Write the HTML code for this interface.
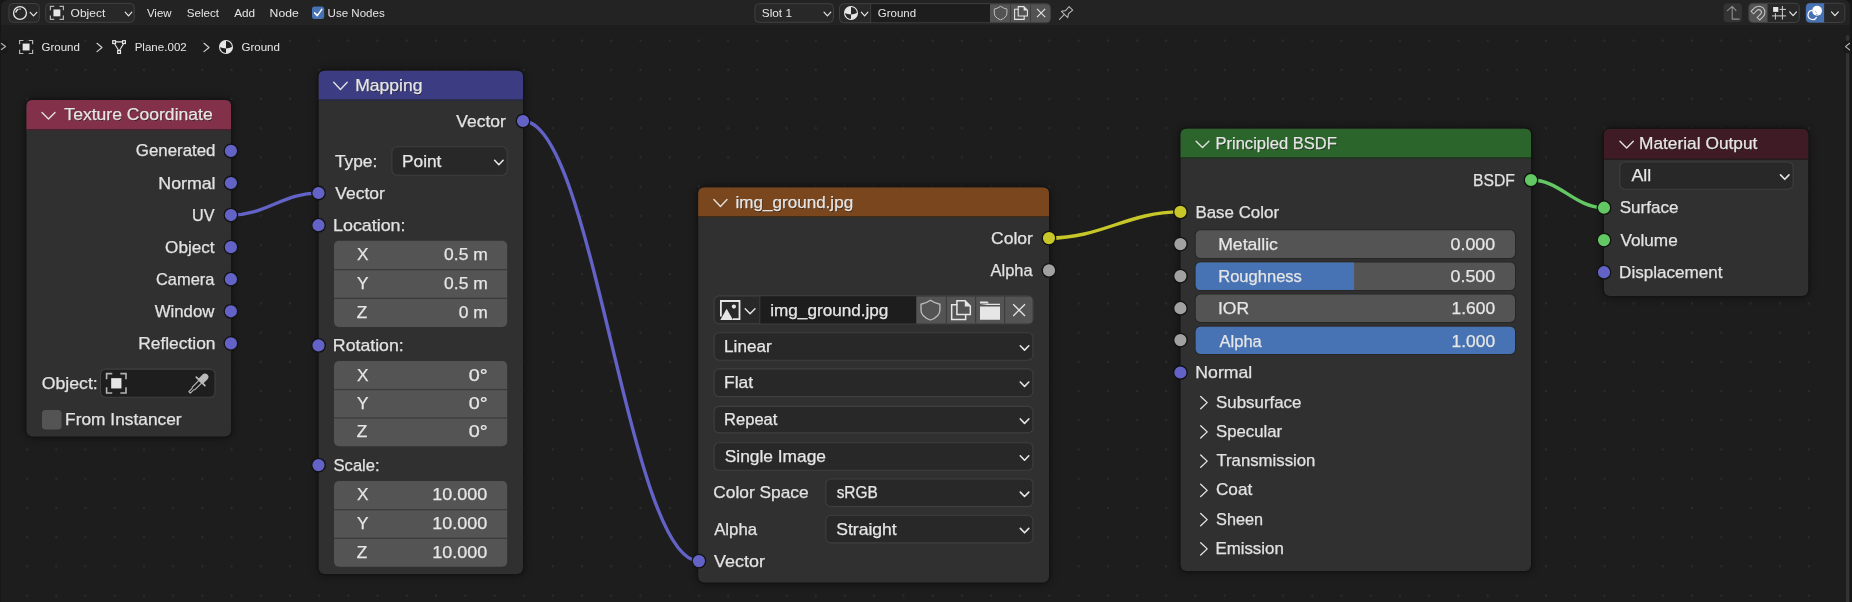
<!DOCTYPE html>
<html><head><meta charset="utf-8">
<style>
html,body{margin:0;padding:0;background:#161616;width:1852px;height:602px;overflow:hidden}
svg{display:block;font-family:"Liberation Sans",sans-serif;will-change:transform}
</style></head>
<body>
<svg width="1852" height="602" viewBox="0 0 1852 602">
<defs>
<pattern id="dots" x="27.1" y="11.4" width="29.21" height="29.21" patternUnits="userSpaceOnUse">
<circle cx="0" cy="0" r="1.1" fill="#2c2c2c"/>
<circle cx="29.21" cy="0" r="1.1" fill="#2c2c2c"/>
<circle cx="0" cy="29.21" r="1.1" fill="#2c2c2c"/>
<circle cx="29.21" cy="29.21" r="1.1" fill="#2c2c2c"/>
</pattern>
<filter id="shadow" x="-20%" y="-20%" width="140%" height="140%">
<feGaussianBlur stdDeviation="4"/>
</filter>
</defs>
<rect x="0" y="0" width="1852" height="602" fill="#161616"/>
<path d="M1,8 Q1,0 9,0 L1842.5,0 Q1850.5,0 1850.5,8 L1850.5,602 L1,602 Z" fill="#1d1d1d"/>
<rect x="1.5" y="25" width="1828" height="577" fill="url(#dots)"/>
<path d="M1,8 Q1,0 9,0 L1842.5,0 Q1850.5,0 1850.5,8 L1850.5,25 L1,25 Z" fill="#232323"/>
<rect x="26.50" y="100.00" width="204.50" height="336.50" rx="6" fill="#000" opacity="0.6" filter="url(#shadow)"/>
<rect x="25.30" y="98.80" width="206.90" height="338.90" rx="7" fill="#141414"/>
<rect x="26.50" y="100.00" width="204.50" height="336.50" rx="6" fill="#303030"/>
<path d="M26.5,129.2 L26.5,106 Q26.5,100 32.5,100 L225,100 Q231,100 231,106 L231,129.2 Z" fill="#83314a"/>
<rect x="26.50" y="129.20" width="204.50" height="1.60" rx="0" fill="#44232d"/>
<path d="M42,112.5 L48.5,119 L55,112.5" fill="none" stroke="#e0e0e0" stroke-width="1.4" stroke-linecap="round" stroke-linejoin="round"/>
<text x="64.96" y="120.90" font-size="16.4" textLength="148.36" lengthAdjust="spacingAndGlyphs" fill="#000" opacity="0.55">Texture Coordinate</text>
<text x="64.36" y="119.90" font-size="16.4" textLength="148.36" lengthAdjust="spacingAndGlyphs" fill="#e6e6e6" stroke="#e6e6e6" stroke-width="0.25">Texture Coordinate</text>
<text x="215.49" y="156.00" font-size="16.4" text-anchor="end" textLength="79.63" lengthAdjust="spacingAndGlyphs" fill="#e2e2e2" stroke="#e2e2e2" stroke-width="0.25">Generated</text>
<text x="215.59" y="189.00" font-size="16.4" text-anchor="end" textLength="57.25" lengthAdjust="spacingAndGlyphs" fill="#e2e2e2" stroke="#e2e2e2" stroke-width="0.25">Normal</text>
<text x="214.47" y="221.00" font-size="16.4" text-anchor="end" textLength="22.52" lengthAdjust="spacingAndGlyphs" fill="#e2e2e2" stroke="#e2e2e2" stroke-width="0.25">UV</text>
<text x="214.53" y="253.00" font-size="16.4" text-anchor="end" textLength="49.44" lengthAdjust="spacingAndGlyphs" fill="#e2e2e2" stroke="#e2e2e2" stroke-width="0.25">Object</text>
<text x="214.40" y="285.00" font-size="16.4" text-anchor="end" textLength="58.43" lengthAdjust="spacingAndGlyphs" fill="#e2e2e2" stroke="#e2e2e2" stroke-width="0.25">Camera</text>
<text x="214.36" y="317.00" font-size="16.4" text-anchor="end" textLength="59.63" lengthAdjust="spacingAndGlyphs" fill="#e2e2e2" stroke="#e2e2e2" stroke-width="0.25">Window</text>
<text x="215.53" y="349.00" font-size="16.4" text-anchor="end" textLength="77.36" lengthAdjust="spacingAndGlyphs" fill="#e2e2e2" stroke="#e2e2e2" stroke-width="0.25">Reflection</text>
<text x="41.76" y="389.00" font-size="16.4" textLength="56.05" lengthAdjust="spacingAndGlyphs" fill="#e2e2e2" stroke="#e2e2e2" stroke-width="0.25">Object:</text>
<rect x="100.50" y="369.10" width="114.50" height="28.20" rx="5" fill="#1e1e1e" stroke="#404040" stroke-width="1.1"/>
<rect x="42.00" y="410.00" width="19.50" height="19.50" rx="3.5" fill="#545454"/>
<text x="65.08" y="425.00" font-size="16.4" textLength="116.51" lengthAdjust="spacingAndGlyphs" fill="#e2e2e2" stroke="#e2e2e2" stroke-width="0.25">From Instancer</text>
<rect x="318.70" y="70.80" width="204.30" height="503.20" rx="6" fill="#000" opacity="0.6" filter="url(#shadow)"/>
<rect x="317.50" y="69.60" width="206.70" height="505.60" rx="7" fill="#141414"/>
<rect x="318.70" y="70.80" width="204.30" height="503.20" rx="6" fill="#303030"/>
<path d="M318.7,99.4 L318.7,76.8 Q318.7,70.8 324.7,70.8 L517,70.8 Q523,70.8 523,76.8 L523,99.4 Z" fill="#3c3c83"/>
<rect x="318.70" y="99.40" width="204.30" height="1.60" rx="0" fill="#282844"/>
<path d="M333.7,82.2 L340.45,89.4 L347.2,82.2" fill="none" stroke="#e0e0e0" stroke-width="1.4" stroke-linecap="round" stroke-linejoin="round"/>
<text x="355.86" y="92.00" font-size="16.4" textLength="67.27" lengthAdjust="spacingAndGlyphs" fill="#000" opacity="0.55">Mapping</text>
<text x="355.26" y="91.00" font-size="16.4" textLength="67.27" lengthAdjust="spacingAndGlyphs" fill="#e6e6e6" stroke="#e6e6e6" stroke-width="0.25">Mapping</text>
<text x="505.78" y="127.00" font-size="16.4" text-anchor="end" textLength="49.56" lengthAdjust="spacingAndGlyphs" fill="#e2e2e2" stroke="#e2e2e2" stroke-width="0.25">Vector</text>
<text x="334.92" y="167.00" font-size="16.4" textLength="42.33" lengthAdjust="spacingAndGlyphs" fill="#e2e2e2" stroke="#e2e2e2" stroke-width="0.25">Type:</text>
<rect x="391.90" y="146.80" width="115.30" height="28.40" rx="5" fill="#282828" stroke="#3f3f3f" stroke-width="1.1"/>
<text x="401.98" y="167.00" font-size="16.4" textLength="39.45" lengthAdjust="spacingAndGlyphs" fill="#e6e6e6" stroke="#e6e6e6" stroke-width="0.25">Point</text>
<path d="M494.59999999999997,160.3 L498.84999999999997,164.7 L503.09999999999997,160.3" fill="none" stroke="#e6e6e6" stroke-width="1.6" stroke-linecap="round" stroke-linejoin="round"/>
<text x="335.22" y="199.00" font-size="16.4" textLength="49.56" lengthAdjust="spacingAndGlyphs" fill="#e2e2e2" stroke="#e2e2e2" stroke-width="0.25">Vector</text>
<text x="333.03" y="231.00" font-size="16.4" textLength="72.50" lengthAdjust="spacingAndGlyphs" fill="#e2e2e2" stroke="#e2e2e2" stroke-width="0.25">Location:</text>
<text x="332.85" y="351.30" font-size="16.4" textLength="70.87" lengthAdjust="spacingAndGlyphs" fill="#e2e2e2" stroke="#e2e2e2" stroke-width="0.25">Rotation:</text>
<text x="333.55" y="471.00" font-size="16.4" textLength="46.07" lengthAdjust="spacingAndGlyphs" fill="#e2e2e2" stroke="#e2e2e2" stroke-width="0.25">Scale:</text>
<rect x="334.00" y="240.80" width="173.20" height="86.20" rx="5" fill="#545454"/>
<rect x="334.00" y="269.03" width="173.20" height="1.20" rx="0" fill="#3a3a3a"/>
<rect x="334.00" y="297.77" width="173.20" height="1.20" rx="0" fill="#3a3a3a"/>
<text x="357.01" y="260.20" font-size="16.4" textLength="11.49" lengthAdjust="spacingAndGlyphs" fill="#e6e6e6" stroke="#e6e6e6" stroke-width="0.25">X</text>
<text x="487.75" y="260.20" font-size="16.4" text-anchor="end" textLength="43.63" lengthAdjust="spacingAndGlyphs" fill="#e6e6e6" stroke="#e6e6e6" stroke-width="0.25">0.5 m</text>
<text x="357.02" y="288.93" font-size="16.4" textLength="11.49" lengthAdjust="spacingAndGlyphs" fill="#e6e6e6" stroke="#e6e6e6" stroke-width="0.25">Y</text>
<text x="487.75" y="288.93" font-size="16.4" text-anchor="end" textLength="43.63" lengthAdjust="spacingAndGlyphs" fill="#e6e6e6" stroke="#e6e6e6" stroke-width="0.25">0.5 m</text>
<text x="356.85" y="317.67" font-size="16.4" textLength="10.52" lengthAdjust="spacingAndGlyphs" fill="#e6e6e6" stroke="#e6e6e6" stroke-width="0.25">Z</text>
<text x="487.75" y="317.67" font-size="16.4" text-anchor="end" textLength="29.03" lengthAdjust="spacingAndGlyphs" fill="#e6e6e6" stroke="#e6e6e6" stroke-width="0.25">0 m</text>
<rect x="334.00" y="361.10" width="173.20" height="85.10" rx="5" fill="#545454"/>
<rect x="334.00" y="388.97" width="173.20" height="1.20" rx="0" fill="#3a3a3a"/>
<rect x="334.00" y="417.33" width="173.20" height="1.20" rx="0" fill="#3a3a3a"/>
<text x="357.01" y="380.50" font-size="16.4" textLength="11.49" lengthAdjust="spacingAndGlyphs" fill="#e6e6e6" stroke="#e6e6e6" stroke-width="0.25">X</text>
<text x="487.79" y="380.50" font-size="16.4" text-anchor="end" textLength="18.97" lengthAdjust="spacingAndGlyphs" fill="#e6e6e6" stroke="#e6e6e6" stroke-width="0.25">0°</text>
<text x="357.02" y="408.87" font-size="16.4" textLength="11.49" lengthAdjust="spacingAndGlyphs" fill="#e6e6e6" stroke="#e6e6e6" stroke-width="0.25">Y</text>
<text x="487.79" y="408.87" font-size="16.4" text-anchor="end" textLength="18.97" lengthAdjust="spacingAndGlyphs" fill="#e6e6e6" stroke="#e6e6e6" stroke-width="0.25">0°</text>
<text x="356.85" y="437.23" font-size="16.4" textLength="10.52" lengthAdjust="spacingAndGlyphs" fill="#e6e6e6" stroke="#e6e6e6" stroke-width="0.25">Z</text>
<text x="487.79" y="437.23" font-size="16.4" text-anchor="end" textLength="18.97" lengthAdjust="spacingAndGlyphs" fill="#e6e6e6" stroke="#e6e6e6" stroke-width="0.25">0°</text>
<rect x="334.00" y="481.00" width="173.20" height="85.80" rx="5" fill="#545454"/>
<rect x="334.00" y="509.10" width="173.20" height="1.20" rx="0" fill="#3a3a3a"/>
<rect x="334.00" y="537.70" width="173.20" height="1.20" rx="0" fill="#3a3a3a"/>
<text x="357.01" y="500.40" font-size="16.4" textLength="11.49" lengthAdjust="spacingAndGlyphs" fill="#e6e6e6" stroke="#e6e6e6" stroke-width="0.25">X</text>
<text x="487.30" y="500.40" font-size="16.4" text-anchor="end" textLength="54.97" lengthAdjust="spacingAndGlyphs" fill="#e6e6e6" stroke="#e6e6e6" stroke-width="0.25">10.000</text>
<text x="357.02" y="529.00" font-size="16.4" textLength="11.49" lengthAdjust="spacingAndGlyphs" fill="#e6e6e6" stroke="#e6e6e6" stroke-width="0.25">Y</text>
<text x="487.30" y="529.00" font-size="16.4" text-anchor="end" textLength="54.97" lengthAdjust="spacingAndGlyphs" fill="#e6e6e6" stroke="#e6e6e6" stroke-width="0.25">10.000</text>
<text x="356.85" y="557.60" font-size="16.4" textLength="10.52" lengthAdjust="spacingAndGlyphs" fill="#e6e6e6" stroke="#e6e6e6" stroke-width="0.25">Z</text>
<text x="487.30" y="557.60" font-size="16.4" text-anchor="end" textLength="54.97" lengthAdjust="spacingAndGlyphs" fill="#e6e6e6" stroke="#e6e6e6" stroke-width="0.25">10.000</text>
<rect x="698.20" y="187.60" width="350.80" height="395.00" rx="6" fill="#000" opacity="0.6" filter="url(#shadow)"/>
<rect x="697.00" y="186.40" width="353.20" height="397.40" rx="7" fill="#141414"/>
<rect x="698.20" y="187.60" width="350.80" height="395.00" rx="6" fill="#303030"/>
<path d="M698.2,216.0 L698.2,193.6 Q698.2,187.6 704.2,187.6 L1043,187.6 Q1049,187.6 1049,193.6 L1049,216.0 Z" fill="#79461d"/>
<rect x="698.20" y="216.00" width="350.80" height="1.60" rx="0" fill="#402c1b"/>
<path d="M713.9,199.6 L720.45,206.4 L727,199.6" fill="none" stroke="#e0e0e0" stroke-width="1.4" stroke-linecap="round" stroke-linejoin="round"/>
<text x="736.11" y="208.80" font-size="16.4" textLength="117.64" lengthAdjust="spacingAndGlyphs" fill="#000" opacity="0.55">img_ground.jpg</text>
<text x="735.51" y="207.80" font-size="16.4" textLength="117.64" lengthAdjust="spacingAndGlyphs" fill="#e6e6e6" stroke="#e6e6e6" stroke-width="0.25">img_ground.jpg</text>
<text x="1032.89" y="244.00" font-size="16.4" text-anchor="end" textLength="41.88" lengthAdjust="spacingAndGlyphs" fill="#e2e2e2" stroke="#e2e2e2" stroke-width="0.25">Color</text>
<text x="1032.60" y="276.00" font-size="16.4" text-anchor="end" textLength="42.03" lengthAdjust="spacingAndGlyphs" fill="#e2e2e2" stroke="#e2e2e2" stroke-width="0.25">Alpha</text>
<rect x="714.10" y="295.90" width="319.00" height="28.00" rx="5" fill="#282828" stroke="#3f3f3f" stroke-width="1.1"/>
<rect x="760.00" y="296.40" width="156.30" height="27.00" rx="0" fill="#1d1d1d"/>
<path d="M916.3,296.4 L1028.2,296.4 Q1032.7,296.4 1032.7,300.9 L1032.7,318.9 Q1032.7,323.4 1028.2,323.4 L916.3,323.4 Z" fill="#545454"/>
<rect x="945.80" y="296.40" width="1.20" height="27.00" rx="0" fill="#3d3d3d"/>
<rect x="975.00" y="296.40" width="1.20" height="27.00" rx="0" fill="#3d3d3d"/>
<rect x="1004.00" y="296.40" width="1.20" height="27.00" rx="0" fill="#3d3d3d"/>
<rect x="759.30" y="296.40" width="1.00" height="27.00" rx="0" fill="#3d3d3d"/>
<text x="770.25" y="316.00" font-size="16.4" textLength="118.15" lengthAdjust="spacingAndGlyphs" fill="#e6e6e6" stroke="#e6e6e6" stroke-width="0.25">img_ground.jpg</text>
<rect x="714.10" y="332.70" width="318.80" height="27.50" rx="5" fill="#282828" stroke="#3f3f3f" stroke-width="1.1"/>
<text x="724.10" y="351.70" font-size="16.4" textLength="47.48" lengthAdjust="spacingAndGlyphs" fill="#e6e6e6" stroke="#e6e6e6" stroke-width="0.25">Linear</text>
<path d="M1020.3000000000001,345.75 L1024.5500000000002,350.15 L1028.8000000000002,345.75" fill="none" stroke="#e6e6e6" stroke-width="1.6" stroke-linecap="round" stroke-linejoin="round"/>
<rect x="714.10" y="368.90" width="318.80" height="27.70" rx="5" fill="#282828" stroke="#3f3f3f" stroke-width="1.1"/>
<text x="724.07" y="387.90" font-size="16.4" textLength="29.06" lengthAdjust="spacingAndGlyphs" fill="#e6e6e6" stroke="#e6e6e6" stroke-width="0.25">Flat</text>
<path d="M1020.3000000000001,382.05 L1024.5500000000002,386.45 L1028.8000000000002,382.05" fill="none" stroke="#e6e6e6" stroke-width="1.6" stroke-linecap="round" stroke-linejoin="round"/>
<rect x="714.10" y="406.40" width="318.80" height="26.50" rx="5" fill="#282828" stroke="#3f3f3f" stroke-width="1.1"/>
<text x="724.14" y="425.40" font-size="16.4" textLength="53.28" lengthAdjust="spacingAndGlyphs" fill="#e6e6e6" stroke="#e6e6e6" stroke-width="0.25">Repeat</text>
<path d="M1020.3000000000001,418.95 L1024.5500000000002,423.34999999999997 L1028.8000000000002,418.95" fill="none" stroke="#e6e6e6" stroke-width="1.6" stroke-linecap="round" stroke-linejoin="round"/>
<rect x="714.10" y="442.70" width="318.80" height="27.60" rx="5" fill="#282828" stroke="#3f3f3f" stroke-width="1.1"/>
<text x="724.71" y="461.70" font-size="16.4" textLength="101.26" lengthAdjust="spacingAndGlyphs" fill="#e6e6e6" stroke="#e6e6e6" stroke-width="0.25">Single Image</text>
<path d="M1020.3000000000001,455.8 L1024.5500000000002,460.2 L1028.8000000000002,455.8" fill="none" stroke="#e6e6e6" stroke-width="1.6" stroke-linecap="round" stroke-linejoin="round"/>
<text x="713.32" y="498.00" font-size="16.4" textLength="95.35" lengthAdjust="spacingAndGlyphs" fill="#e2e2e2" stroke="#e2e2e2" stroke-width="0.25">Color Space</text>
<rect x="825.80" y="479.00" width="207.10" height="27.60" rx="5" fill="#282828" stroke="#3f3f3f" stroke-width="1.1"/>
<text x="836.67" y="498.00" font-size="16.4" textLength="41.14" lengthAdjust="spacingAndGlyphs" fill="#e6e6e6" stroke="#e6e6e6" stroke-width="0.25">sRGB</text>
<path d="M1020.3000000000001,492.1 L1024.5500000000002,496.5 L1028.8000000000002,492.1" fill="none" stroke="#e6e6e6" stroke-width="1.6" stroke-linecap="round" stroke-linejoin="round"/>
<text x="714.17" y="534.50" font-size="16.4" textLength="42.93" lengthAdjust="spacingAndGlyphs" fill="#e2e2e2" stroke="#e2e2e2" stroke-width="0.25">Alpha</text>
<rect x="825.80" y="515.30" width="207.10" height="27.60" rx="5" fill="#282828" stroke="#3f3f3f" stroke-width="1.1"/>
<text x="836.30" y="534.50" font-size="16.4" textLength="60.42" lengthAdjust="spacingAndGlyphs" fill="#e6e6e6" stroke="#e6e6e6" stroke-width="0.25">Straight</text>
<path d="M1020.3000000000001,528.3999999999999 L1024.5500000000002,532.8 L1028.8000000000002,528.3999999999999" fill="none" stroke="#e6e6e6" stroke-width="1.6" stroke-linecap="round" stroke-linejoin="round"/>
<text x="714.12" y="567.00" font-size="16.4" textLength="50.87" lengthAdjust="spacingAndGlyphs" fill="#e2e2e2" stroke="#e2e2e2" stroke-width="0.25">Vector</text>
<rect x="1180.60" y="128.80" width="350.40" height="442.20" rx="6" fill="#000" opacity="0.6" filter="url(#shadow)"/>
<rect x="1179.40" y="127.60" width="352.80" height="444.60" rx="7" fill="#141414"/>
<rect x="1180.60" y="128.80" width="350.40" height="442.20" rx="6" fill="#303030"/>
<path d="M1180.6,157.3 L1180.6,134.8 Q1180.6,128.8 1186.6,128.8 L1525,128.8 Q1531,128.8 1531,134.8 L1531,157.3 Z" fill="#2b652b"/>
<rect x="1180.60" y="157.30" width="350.40" height="1.60" rx="0" fill="#213821"/>
<path d="M1196.1,141.2 L1202.5,147.6 L1208.9,141.2" fill="none" stroke="#e0e0e0" stroke-width="1.4" stroke-linecap="round" stroke-linejoin="round"/>
<text x="1216.04" y="150.00" font-size="16.4" textLength="121.42" lengthAdjust="spacingAndGlyphs" fill="#000" opacity="0.55">Principled BSDF</text>
<text x="1215.44" y="149.00" font-size="16.4" textLength="121.42" lengthAdjust="spacingAndGlyphs" fill="#e6e6e6" stroke="#e6e6e6" stroke-width="0.25">Principled BSDF</text>
<text x="1514.93" y="185.50" font-size="16.4" text-anchor="end" textLength="41.81" lengthAdjust="spacingAndGlyphs" fill="#e2e2e2" stroke="#e2e2e2" stroke-width="0.25">BSDF</text>
<text x="1195.41" y="218.00" font-size="16.4" textLength="83.67" lengthAdjust="spacingAndGlyphs" fill="#e2e2e2" stroke="#e2e2e2" stroke-width="0.25">Base Color</text>
<rect x="1194.70" y="229.20" width="321.30" height="29.90" rx="6" fill="#262626"/>
<rect x="1195.70" y="230.20" width="319.30" height="27.90" rx="5" fill="#545454"/>
<text x="1218.15" y="250.00" font-size="16.4" textLength="59.81" lengthAdjust="spacingAndGlyphs" fill="#e6e6e6" stroke="#e6e6e6" stroke-width="0.25">Metallic</text>
<text x="1495.20" y="250.00" font-size="16.4" text-anchor="end" textLength="44.59" lengthAdjust="spacingAndGlyphs" fill="#e6e6e6" stroke="#e6e6e6" stroke-width="0.25">0.000</text>
<rect x="1194.70" y="261.40" width="321.30" height="29.70" rx="6" fill="#262626"/>
<rect x="1195.70" y="262.40" width="319.30" height="27.70" rx="5" fill="#545454"/>
<path d="M1354.1,262.4 L1200.7,262.4 Q1195.7,262.4 1195.7,267.4 L1195.7,285.1 Q1195.7,290.1 1200.7,290.1 L1354.1,290.1 Z" fill="#4772b3"/>
<text x="1218.24" y="282.20" font-size="16.4" textLength="83.65" lengthAdjust="spacingAndGlyphs" fill="#e6e6e6" stroke="#e6e6e6" stroke-width="0.25">Roughness</text>
<text x="1495.20" y="282.20" font-size="16.4" text-anchor="end" textLength="44.59" lengthAdjust="spacingAndGlyphs" fill="#e6e6e6" stroke="#e6e6e6" stroke-width="0.25">0.500</text>
<rect x="1194.70" y="293.60" width="321.30" height="29.40" rx="6" fill="#262626"/>
<rect x="1195.70" y="294.60" width="319.30" height="27.40" rx="5" fill="#545454"/>
<text x="1217.98" y="314.40" font-size="16.4" textLength="31.13" lengthAdjust="spacingAndGlyphs" fill="#e6e6e6" stroke="#e6e6e6" stroke-width="0.25">IOR</text>
<text x="1495.18" y="314.40" font-size="16.4" text-anchor="end" textLength="43.61" lengthAdjust="spacingAndGlyphs" fill="#e6e6e6" stroke="#e6e6e6" stroke-width="0.25">1.600</text>
<rect x="1194.70" y="325.80" width="321.30" height="29.10" rx="6" fill="#262626"/>
<rect x="1195.70" y="326.80" width="319.30" height="27.10" rx="5" fill="#545454"/>
<rect x="1195.70" y="326.80" width="319.30" height="27.10" rx="5" fill="#4772b3"/>
<text x="1219.57" y="346.60" font-size="16.4" textLength="42.23" lengthAdjust="spacingAndGlyphs" fill="#e6e6e6" stroke="#e6e6e6" stroke-width="0.25">Alpha</text>
<text x="1495.18" y="346.60" font-size="16.4" text-anchor="end" textLength="43.61" lengthAdjust="spacingAndGlyphs" fill="#e6e6e6" stroke="#e6e6e6" stroke-width="0.25">1.000</text>
<text x="1195.35" y="378.20" font-size="16.4" textLength="56.83" lengthAdjust="spacingAndGlyphs" fill="#e2e2e2" stroke="#e2e2e2" stroke-width="0.25">Normal</text>
<path d="M1200.7,396.5 L1207.2,402.6 L1200.7,408.7" fill="none" stroke="#e6e6e6" stroke-width="1.3" stroke-linecap="round" stroke-linejoin="round"/>
<text x="1216.03" y="407.50" font-size="16.4" textLength="85.42" lengthAdjust="spacingAndGlyphs" fill="#e2e2e2" stroke="#e2e2e2" stroke-width="0.25">Subsurface</text>
<path d="M1200.7,425.76 L1207.2,431.86 L1200.7,437.96" fill="none" stroke="#e6e6e6" stroke-width="1.3" stroke-linecap="round" stroke-linejoin="round"/>
<text x="1216.04" y="436.76" font-size="16.4" textLength="66.04" lengthAdjust="spacingAndGlyphs" fill="#e2e2e2" stroke="#e2e2e2" stroke-width="0.25">Specular</text>
<path d="M1200.7,455.02 L1207.2,461.12 L1200.7,467.21999999999997" fill="none" stroke="#e6e6e6" stroke-width="1.3" stroke-linecap="round" stroke-linejoin="round"/>
<text x="1216.43" y="466.02" font-size="16.4" textLength="98.95" lengthAdjust="spacingAndGlyphs" fill="#e2e2e2" stroke="#e2e2e2" stroke-width="0.25">Transmission</text>
<path d="M1200.7,484.28 L1207.2,490.38 L1200.7,496.47999999999996" fill="none" stroke="#e6e6e6" stroke-width="1.3" stroke-linecap="round" stroke-linejoin="round"/>
<text x="1215.93" y="495.28" font-size="16.4" textLength="36.30" lengthAdjust="spacingAndGlyphs" fill="#e2e2e2" stroke="#e2e2e2" stroke-width="0.25">Coat</text>
<path d="M1200.7,513.54 L1207.2,519.64 L1200.7,525.74" fill="none" stroke="#e6e6e6" stroke-width="1.3" stroke-linecap="round" stroke-linejoin="round"/>
<text x="1216.06" y="524.54" font-size="16.4" textLength="46.99" lengthAdjust="spacingAndGlyphs" fill="#e2e2e2" stroke="#e2e2e2" stroke-width="0.25">Sheen</text>
<path d="M1200.7,542.8 L1207.2,548.9 L1200.7,555.0" fill="none" stroke="#e6e6e6" stroke-width="1.3" stroke-linecap="round" stroke-linejoin="round"/>
<text x="1215.42" y="553.80" font-size="16.4" textLength="68.38" lengthAdjust="spacingAndGlyphs" fill="#e2e2e2" stroke="#e2e2e2" stroke-width="0.25">Emission</text>
<rect x="1604.00" y="129.00" width="204.20" height="167.00" rx="6" fill="#000" opacity="0.6" filter="url(#shadow)"/>
<rect x="1602.80" y="127.80" width="206.60" height="169.40" rx="7" fill="#141414"/>
<rect x="1604.00" y="129.00" width="204.20" height="167.00" rx="6" fill="#303030"/>
<path d="M1604,158.4 L1604,135 Q1604,129 1610,129 L1802.2,129 Q1808.2,129 1808.2,135 L1808.2,158.4 Z" fill="#3f1b25"/>
<rect x="1604.00" y="158.40" width="204.20" height="1.60" rx="0" fill="#291a1e"/>
<path d="M1620,141.2 L1626.65,148.0 L1633.3,141.2" fill="none" stroke="#e0e0e0" stroke-width="1.4" stroke-linecap="round" stroke-linejoin="round"/>
<text x="1639.58" y="149.80" font-size="16.4" textLength="118.45" lengthAdjust="spacingAndGlyphs" fill="#000" opacity="0.55">Material Output</text>
<text x="1638.98" y="148.80" font-size="16.4" textLength="118.45" lengthAdjust="spacingAndGlyphs" fill="#e6e6e6" stroke="#e6e6e6" stroke-width="0.25">Material Output</text>
<rect x="1619.80" y="162.00" width="173.30" height="27.20" rx="5" fill="#282828" stroke="#3f3f3f" stroke-width="1.1"/>
<text x="1631.47" y="181.00" font-size="16.4" textLength="19.83" lengthAdjust="spacingAndGlyphs" fill="#e6e6e6" stroke="#e6e6e6" stroke-width="0.25">All</text>
<path d="M1780.5,174.9 L1784.75,179.29999999999998 L1789.0,174.9" fill="none" stroke="#e6e6e6" stroke-width="1.6" stroke-linecap="round" stroke-linejoin="round"/>
<text x="1619.73" y="213.00" font-size="16.4" textLength="58.73" lengthAdjust="spacingAndGlyphs" fill="#e2e2e2" stroke="#e2e2e2" stroke-width="0.25">Surface</text>
<text x="1620.43" y="245.50" font-size="16.4" textLength="57.33" lengthAdjust="spacingAndGlyphs" fill="#e2e2e2" stroke="#e2e2e2" stroke-width="0.25">Volume</text>
<text x="1619.10" y="277.50" font-size="16.4" textLength="103.32" lengthAdjust="spacingAndGlyphs" fill="#e2e2e2" stroke="#e2e2e2" stroke-width="0.25">Displacement</text>
<path d="M231,215.1 C266.0,215.1 283.5,193 318.5,193" fill="none" stroke="#6363c7" stroke-width="3.4" stroke-linecap="round"/>
<path d="M523,121 C593.36,121 628.54,561.1 698.9,561.1" fill="none" stroke="#6363c7" stroke-width="3.4" stroke-linecap="round"/>
<path d="M1049,238.1 C1101.56,238.1 1127.8400000000001,211.9 1180.4,211.9" fill="none" stroke="#c7c729" stroke-width="3.4" stroke-linecap="round"/>
<path d="M1531,180 C1560.2,180 1574.8,207.7 1604,207.7" fill="none" stroke="#63c763" stroke-width="3.4" stroke-linecap="round"/>
<circle cx="230.90" cy="150.90" r="6.75" fill="#6363c7" stroke="#121212" stroke-width="1.3"/>
<circle cx="230.90" cy="182.98" r="6.75" fill="#6363c7" stroke="#121212" stroke-width="1.3"/>
<circle cx="230.90" cy="215.06" r="6.75" fill="#6363c7" stroke="#121212" stroke-width="1.3"/>
<circle cx="230.90" cy="247.14" r="6.75" fill="#6363c7" stroke="#121212" stroke-width="1.3"/>
<circle cx="230.90" cy="279.22" r="6.75" fill="#6363c7" stroke="#121212" stroke-width="1.3"/>
<circle cx="230.90" cy="311.30" r="6.75" fill="#6363c7" stroke="#121212" stroke-width="1.3"/>
<circle cx="230.90" cy="343.38" r="6.75" fill="#6363c7" stroke="#121212" stroke-width="1.3"/>
<circle cx="523.00" cy="121.00" r="6.75" fill="#6363c7" stroke="#121212" stroke-width="1.3"/>
<circle cx="318.50" cy="193.00" r="6.75" fill="#6363c7" stroke="#121212" stroke-width="1.3"/>
<circle cx="318.50" cy="225.20" r="6.75" fill="#6363c7" stroke="#121212" stroke-width="1.3"/>
<circle cx="318.50" cy="345.40" r="6.75" fill="#6363c7" stroke="#121212" stroke-width="1.3"/>
<circle cx="318.50" cy="465.10" r="6.75" fill="#6363c7" stroke="#121212" stroke-width="1.3"/>
<circle cx="1049.00" cy="238.10" r="6.75" fill="#c7c729" stroke="#121212" stroke-width="1.3"/>
<circle cx="1049.00" cy="270.40" r="6.75" fill="#a1a1a1" stroke="#121212" stroke-width="1.3"/>
<circle cx="698.90" cy="561.10" r="6.75" fill="#6363c7" stroke="#121212" stroke-width="1.3"/>
<circle cx="1531.00" cy="180.00" r="6.75" fill="#63c763" stroke="#121212" stroke-width="1.3"/>
<circle cx="1180.40" cy="211.90" r="6.75" fill="#c7c729" stroke="#121212" stroke-width="1.3"/>
<circle cx="1180.40" cy="244.10" r="6.75" fill="#a1a1a1" stroke="#121212" stroke-width="1.3"/>
<circle cx="1180.40" cy="276.10" r="6.75" fill="#a1a1a1" stroke="#121212" stroke-width="1.3"/>
<circle cx="1180.40" cy="308.20" r="6.75" fill="#a1a1a1" stroke="#121212" stroke-width="1.3"/>
<circle cx="1180.40" cy="340.10" r="6.75" fill="#a1a1a1" stroke="#121212" stroke-width="1.3"/>
<circle cx="1180.40" cy="372.50" r="6.75" fill="#6363c7" stroke="#121212" stroke-width="1.3"/>
<circle cx="1604.00" cy="207.70" r="6.75" fill="#63c763" stroke="#121212" stroke-width="1.3"/>
<circle cx="1604.00" cy="240.10" r="6.75" fill="#63c763" stroke="#121212" stroke-width="1.3"/>
<circle cx="1604.00" cy="272.20" r="6.75" fill="#6363c7" stroke="#121212" stroke-width="1.3"/>
<rect x="8.90" y="3.50" width="30.40" height="18.70" rx="4" fill="#282828" stroke="#404040" stroke-width="1"/>
<circle cx="20.00" cy="13.00" r="6.45" fill="none" stroke="#e6e6e6" stroke-width="1.3"/>
<path d="M30.2,12.3 L33.5,15.8 L36.8,12.3" fill="none" stroke="#e6e6e6" stroke-width="1.2" stroke-linecap="round" stroke-linejoin="round"/>
<rect x="45.70" y="3.40" width="88.50" height="18.90" rx="4" fill="#282828" stroke="#404040" stroke-width="1"/>
<text x="70.63" y="17.00" font-size="11.2" textLength="34.66" lengthAdjust="spacingAndGlyphs" fill="#e6e6e6">Object</text>
<path d="M125.2,12.2 L128.5,15.8 L131.8,12.2" fill="none" stroke="#e6e6e6" stroke-width="1.2" stroke-linecap="round" stroke-linejoin="round"/>
<text x="146.95" y="17.10" font-size="11.2" textLength="24.62" lengthAdjust="spacingAndGlyphs" fill="#e6e6e6">View</text>
<text x="186.77" y="17.10" font-size="11.2" textLength="32.21" lengthAdjust="spacingAndGlyphs" fill="#e6e6e6">Select</text>
<text x="234.28" y="17.10" font-size="11.2" textLength="20.88" lengthAdjust="spacingAndGlyphs" fill="#e6e6e6">Add</text>
<text x="269.60" y="17.10" font-size="11.2" textLength="29.14" lengthAdjust="spacingAndGlyphs" fill="#e6e6e6">Node</text>
<rect x="312.00" y="6.60" width="12.20" height="12.30" rx="2.5" fill="#4772b3"/>
<path d="M314.6,12.9 L317.3,15.6 L321.8,9.4" fill="none" stroke="#ffffff" stroke-width="1.5" stroke-linecap="round" stroke-linejoin="round"/>
<text x="327.61" y="17.10" font-size="11.2" textLength="57.11" lengthAdjust="spacingAndGlyphs" fill="#e6e6e6">Use Nodes</text>
<rect x="754.90" y="3.70" width="78.50" height="18.60" rx="4" fill="#282828" stroke="#404040" stroke-width="1"/>
<text x="761.76" y="16.90" font-size="11.2" textLength="30.21" lengthAdjust="spacingAndGlyphs" fill="#e6e6e6">Slot 1</text>
<path d="M824,12.2 L827.4,15.8 L830.8,12.2" fill="none" stroke="#e6e6e6" stroke-width="1.2" stroke-linecap="round" stroke-linejoin="round"/>
<path d="M839.5,7.7 Q839.5,3.7 843.5,3.7 L1046.5,3.7 Q1050.5,3.7 1050.5,7.7 L1050.5,18.7 Q1050.5,22.7 1046.5,22.7 L843.5,22.7 Q839.5,22.7 839.5,18.7 Z" fill="#282828" stroke="#404040" stroke-width="1"/>
<rect x="870.90" y="4.20" width="119.20" height="18.00" rx="0" fill="#1d1d1d"/>
<rect x="870.20" y="4.20" width="0.90" height="18.00" rx="0" fill="#404040"/>
<path d="M990,4.2 L1046.5,4.2 Q1050,4.2 1050,7.7 L1050,18.7 Q1050,22.2 1046.5,22.2 L990,22.2 Z" fill="#535353"/>
<rect x="1010.00" y="4.20" width="1.00" height="18.00" rx="0" fill="#3d3d3d"/>
<rect x="1030.00" y="4.20" width="1.00" height="18.00" rx="0" fill="#3d3d3d"/>
<text x="877.82" y="16.80" font-size="11.2" textLength="38.21" lengthAdjust="spacingAndGlyphs" fill="#e6e6e6">Ground</text>
<path d="M861.3,12.2 L864.5999999999999,15.8 L867.9,12.2" fill="none" stroke="#e6e6e6" stroke-width="1.2" stroke-linecap="round" stroke-linejoin="round"/>
<text x="41.52" y="51.00" font-size="11.2" textLength="38.42" lengthAdjust="spacingAndGlyphs" fill="#e6e6e6">Ground</text>
<text x="134.65" y="50.90" font-size="11.2" textLength="52.13" lengthAdjust="spacingAndGlyphs" fill="#e6e6e6">Plane.002</text>
<text x="241.42" y="51.00" font-size="11.2" textLength="38.53" lengthAdjust="spacingAndGlyphs" fill="#e6e6e6">Ground</text>
<path d="M97,43.3 L102,47.45 L97,51.6" fill="none" stroke="#cfcfcf" stroke-width="1.2" stroke-linecap="round" stroke-linejoin="round"/>
<path d="M204,43.3 L209,47.45 L204,51.6" fill="none" stroke="#cfcfcf" stroke-width="1.2" stroke-linecap="round" stroke-linejoin="round"/>
<rect x="1723.50" y="3.30" width="18.50" height="19.00" rx="4" fill="#333333"/>
<path d="M1748.7,7.3 Q1748.7,3.3 1752.7,3.3 L1795.3,3.3 Q1799.3,3.3 1799.3,7.3 L1799.3,18.5 Q1799.3,22.5 1795.3,22.5 L1752.7,22.5 Q1748.7,22.5 1748.7,18.5 Z" fill="#282828" stroke="#404040" stroke-width="1"/>
<path d="M1752.7,3.8 L1767.5,3.8 L1767.5,22 L1752.7,22 Q1749.2,22 1749.2,18.5 L1749.2,7.3 Q1749.2,3.8 1752.7,3.8 Z" fill="#545454"/>
<path d="M1810,3.3 L1840.8,3.3 Q1844.8,3.3 1844.8,7.3 L1844.8,18.5 Q1844.8,22.5 1840.8,22.5 L1810,22.5 Q1806,22.5 1806,18.5 L1806,7.3 Q1806,3.3 1810,3.3 Z" fill="#282828" stroke="#404040" stroke-width="1"/>
<path d="M1810,3.3 L1824.1,3.3 L1824.1,22.5 L1810,22.5 Q1806,22.5 1806,18.5 L1806,7.3 Q1806,3.3 1810,3.3 Z" fill="#4772b3"/>
<path d="M1789.7,11.9 L1793.1,15.6 L1796.5,11.9" fill="none" stroke="#e6e6e6" stroke-width="1.2" stroke-linecap="round" stroke-linejoin="round"/>
<path d="M1831.5,11.9 L1834.9,15.6 L1838.3,11.9" fill="none" stroke="#e6e6e6" stroke-width="1.2" stroke-linecap="round" stroke-linejoin="round"/>
<rect x="1846.00" y="35.00" width="3.20" height="600.00" rx="1.6" fill="#333333"/>
<rect x="1843.20" y="40.80" width="12.00" height="12.40" rx="4" fill="#1a1a1a"/>
<path d="M1849.6,43.3 L1845.5,46.6 L1849.6,49.9" fill="none" stroke="#b8b8b8" stroke-width="1.2" stroke-linecap="round" stroke-linejoin="round"/>
<rect x="1850.50" y="0.00" width="2.00" height="602.00" rx="0" fill="#161616"/>
<rect x="-6.00" y="40.50" width="13.80" height="13.00" rx="4" fill="#1a1a1a"/>
<path d="M1.4,43.5 L5.6,46.5 L1.4,49.5" fill="none" stroke="#b0b0b0" stroke-width="1.2" stroke-linecap="round" stroke-linejoin="round"/>
<path d="M50.4,9.65 L50.4,6.4 L53.65,6.4 M60.15,6.4 L63.4,6.4 L63.4,9.65 M63.4,16.15 L63.4,19.4 L60.15,19.4 M53.65,19.4 L50.4,19.4 L50.4,16.15" fill="none" stroke="#b4b4b4" stroke-width="1.2" stroke-linecap="square" stroke-linejoin="miter"/>
<rect x="53.45" y="9.46" width="6.89" height="6.89" rx="0" fill="#e6e6e6"/>
<path d="M19.6,43.75 L19.6,40.5 L22.85,40.5 M29.35,40.5 L32.6,40.5 L32.6,43.75 M32.6,50.25 L32.6,53.5 L29.35,53.5 M22.85,53.5 L19.6,53.5 L19.6,50.25" fill="none" stroke="#b4b4b4" stroke-width="1.2" stroke-linecap="square" stroke-linejoin="miter"/>
<rect x="22.66" y="43.55" width="6.89" height="6.89" rx="0" fill="#e6e6e6"/>
<path d="M106.6,378.45000000000005 L106.6,373.6 L111.44999999999999,373.6 M121.15,373.6 L126.0,373.6 L126.0,378.45000000000005 M126.0,388.15 L126.0,393.0 L121.15,393.0 M111.44999999999999,393.0 L106.6,393.0 L106.6,388.15" fill="none" stroke="#b4b4b4" stroke-width="1.6" stroke-linecap="square" stroke-linejoin="miter"/>
<rect x="111.16" y="378.16" width="10.28" height="10.28" rx="0" fill="#e6e6e6"/>
<path d="M115.8,41.9 L122,41.9 M114.6,43.7 L118.5,50.2 M123.5,43.7 L119.6,50.2" fill="none" stroke="#e6e6e6" stroke-width="1.1"/>
<rect x="112.70" y="40.70" width="2.80" height="2.80" rx="0" fill="none" stroke="#e6e6e6" stroke-width="1.2"/>
<rect x="122.60" y="40.70" width="2.80" height="2.80" rx="0" fill="none" stroke="#e6e6e6" stroke-width="1.2"/>
<rect x="117.70" y="50.60" width="2.80" height="2.80" rx="0" fill="none" stroke="#e6e6e6" stroke-width="1.2"/>
<circle cx="226.00" cy="47.00" r="6.45" fill="none" stroke="#e6e6e6" stroke-width="1.1"/>
<path d="M226,47.8 L226,40.5 A6.5,6.5 0 0 0 219.5,47 Q222.85,48.4 226,48.54 Z" fill="#e6e6e6"/>
<path d="M226,48.54 L226,53.5 A6.5,6.5 0 0 0 232.5,46.8 Q229.15,48.4 226,48.54 Z" fill="#e6e6e6"/>
<circle cx="851.00" cy="13.00" r="6.45" fill="none" stroke="#e6e6e6" stroke-width="1.1"/>
<path d="M851,13.8 L851,6.5 A6.5,6.5 0 0 0 844.5,13 Q847.85,14.4 851,14.54 Z" fill="#e6e6e6"/>
<path d="M851,14.54 L851,19.5 A6.5,6.5 0 0 0 857.5,12.8 Q854.15,14.4 851,14.54 Z" fill="#e6e6e6"/>
<path d="M15.9,12.0 A4.3,4.3 0 0 1 17.9,9.3" fill="none" stroke="#e6e6e6" stroke-width="1.4" fill="none" stroke-linecap="round"/>
<rect x="19.40" y="8.40" width="1.30" height="1.30" rx="0" fill="#e6e6e6"/>
<path d="M1000.5999999999999,6.3 Q1003.7499999999999,8.612 1006.9,9.02 L1006.9,13.099999999999998 Q1006.9,17.451999999999998 1000.5999999999999,19.9 Q994.3,17.451999999999998 994.3,13.099999999999998 L994.3,9.02 Q997.4499999999999,8.612 1000.5999999999999,6.3 Z" fill="none" stroke="#bdbdbd" stroke-width="1.0"/>
<path d="M1018.0,9.3 L1014.6,9.3 L1014.6,19.4 L1024.2,19.4 L1024.2,16.5" fill="none" stroke="#e6e6e6" stroke-width="1.1" stroke-linecap="square" stroke-linejoin="miter"/>
<path d="M1018.2,6.6 L1023.8,6.6 L1027.4,10.2 L1027.4,16.0 L1018.2,16.0 Z" fill="none" stroke="#e6e6e6" stroke-width="1.1" stroke-linecap="square" stroke-linejoin="miter"/>
<path d="M1023.6,6.6 L1027.4,10.4 L1023.6,10.4 Z" fill="#e6e6e6"/>
<path d="M1037,8.8 L1045.2,17.1 M1045.2,8.8 L1037,17.1" fill="none" stroke="#e6e6e6" stroke-width="1.1"/>
<path d="M1061.4,11.3 L1065.6,10.6 L1069.1,6.6 L1072.7,10.1 L1068.6,13.5 L1067.7,17.6 Z M1059.5,19.4 L1063.9,14.9" fill="none" stroke="#b4b4b4" stroke-width="1.1" stroke-linejoin="round" stroke-linecap="round"/>
<path d="M720.9,315.5 L720.9,301 L739.5,301 L739.5,319.1 L733.9,319.1" fill="none" stroke="#e6e6e6" stroke-width="1.8" stroke-linecap="square" stroke-linejoin="miter"/>
<path d="M720.3,320 L726.65,308.8 L733.1,320 Z" fill="#e6e6e6"/>
<circle cx="733.90" cy="306.60" r="2.1" fill="#e6e6e6"/>
<path d="M745.2,308.8 L750.1,313.8 L755,308.8" fill="none" stroke="#e6e6e6" stroke-width="1.4" stroke-linecap="round" stroke-linejoin="round"/>
<path d="M930.45,300.3 Q935.1750000000001,303.649 939.9,304.24 L939.9,310.15 Q939.9,316.454 930.45,320.0 Q921.0,316.454 921.0,310.15 L921.0,304.24 Q925.725,303.649 930.45,300.3 Z" fill="none" stroke="#bdbdbd" stroke-width="1.3"/>
<path d="M956.6285714285714,304.80857142857144 L951.6742857142857,304.80857142857144 L951.6742857142857,319.5257142857143 L965.6628571428571,319.5257142857143 L965.6628571428571,315.3" fill="none" stroke="#e6e6e6" stroke-width="1.5" stroke-linecap="square" stroke-linejoin="miter"/>
<path d="M956.92,300.8742857142857 L965.0799999999999,300.8742857142857 L970.3257142857142,306.12 L970.3257142857142,314.57142857142856 L956.92,314.57142857142856 Z" fill="none" stroke="#e6e6e6" stroke-width="1.5" stroke-linecap="square" stroke-linejoin="miter"/>
<path d="M964.7885714285713,300.8742857142857 L970.3257142857142,306.4114285714286 L964.7885714285713,306.4114285714286 Z" fill="#e6e6e6"/>
<path d="M980,303.5 L980,301.5 L987.5,301.5 L989,303.5 Z M980,305 L1000,305 L1000,303.8 L989.5,303.8 Z M980,306.5 L1000,306.5 L1000,319.8 L980,319.8 Z" fill="#e6e6e6"/>
<path d="M1013.2,304.2 L1025,316 M1025,304.2 L1013.2,316" fill="none" stroke="#e6e6e6" stroke-width="1.3"/>
<g transform="translate(200.6,381.4) rotate(-45)" fill="none" stroke="#bababa"><path d="M-0.8,-3.4 L6.2,-3.4 A3.4,3.4 0 0 1 6.2,3.4 L-0.8,3.4 Z" fill="#bababa" stroke="none"/><path d="M0,-6.1 L0,6.1" stroke-width="1.7" stroke-linecap="round"/><path d="M-0.5,-1.9 L-9.5,-1.9 L-11,-1.1 L-15.6,-1.1 L-15.6,1.1 L-11,1.1 L-9.5,1.9 L-0.5,1.9" stroke-width="1.1" stroke-linejoin="round"/></g>
<path d="M1727.4,10.6 L1732.2,6.3 L1736,10.6 M1732.2,6.6 L1732.2,19.1 L1739.2,19.1" fill="none" stroke="#8e8e8e" stroke-width="1.1" stroke-linejoin="round" stroke-linecap="round"/>
<g transform="translate(1758.8,12.3) rotate(45)"><path d="M-4.35,5.3 L-4.35,0 A4.35,4.35 0 0 1 4.35,0 L4.35,5.3" fill="none" stroke="#c4c4c4" stroke-width="4.6" stroke-linecap="butt"/><path d="M-4.35,4.3 L-4.35,0 A4.35,4.35 0 0 1 4.35,0 L4.35,4.3" fill="none" stroke="#545454" stroke-width="2.5" stroke-linecap="butt"/></g>
<rect x="1773.10" y="7.00" width="5.20" height="4.90" rx="0" fill="#e6e6e6"/>
<path d="M1779.6,9.4 L1786,9.4 M1772,15.9 L1786,15.9 M1775.4,13.2 L1775.4,19.6 M1782.4,6 L1782.4,19.6" fill="none" stroke="#d0d0d0" stroke-width="1.0"/>
<path d="M1812.6,10.35 A4.6,4.6 0 1 0 1816.66,17.12" fill="none" stroke="#ffffff" stroke-width="1.2" fill="none"/>
<circle cx="1817.10" cy="10.76" r="4.9" fill="#ffffff"/>
<path d="M1816.9,15.2 A4.6,4.6 0 0 0 1813.8,10.5" fill="none" stroke="#4772b3" stroke-width="0.9" fill="none" stroke-dasharray="1.2 1.6"/>
</svg>
</body></html>
